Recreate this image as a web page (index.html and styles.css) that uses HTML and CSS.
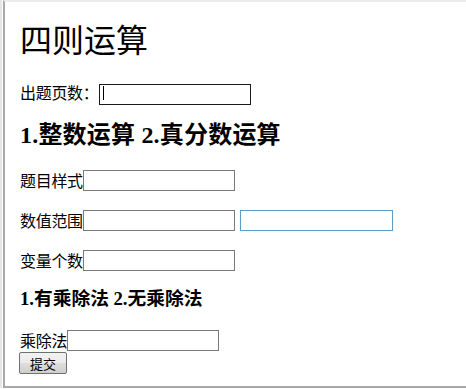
FILE: index.html
```html
<!DOCTYPE html>
<html lang="zh-CN">

<head>
  <meta charset="UTF-8">
  <title>四则运算</title>
  <link rel="stylesheet" href="styles.css">
</head>

<body>
  <div class="frame">
    <h1>四则运算</h1>

    <form class="quiz-form">
      <div class="row row-first">
        <label>出题页数：</label>
        <span class="caret-wrap">
          <input type="text" class="field field-dark">
          <span class="caret"></span>
        </span>
      </div>

      <h2>1.整数运算 2.真分数运算</h2>

      <div class="row row-style">
        <label>题目样式</label><input type="text" class="field">
      </div>

      <div class="row">
        <label>数值范围</label><input type="text" class="field"><input type="text" class="field field-focus">
      </div>

      <div class="row">
        <label>变量个数</label><input type="text" class="field">
      </div>

      <h3>1.有乘除法 2.无乘除法</h3>

      <div class="row row-last">
        <label>乘除法</label><input type="text" class="field">
      </div>
      <button type="button" class="submit-btn">提交</button>
    </form>
  </div>
</body>

</html>
```

FILE: styles.css
```css
* {
  box-sizing: border-box;
}

html {
  background: #ffffff;
}

body {
  margin: 0;
  border-left: 2px solid #e6e6e6;
  font-family: "Noto Sans CJK SC", "Liberation Sans", sans-serif;
  color: #000;
}

.frame {
  margin-left: 1px;
  height: 388px;
  border-top: 2px solid #ececec;
  border-left: 2px solid #a8a8a8;
  border-bottom: 2px solid #a8a8a8;
  padding-left: 14px;
  background: #fff;
}

h1 {
  margin: 21px 0 0 1px;
  font-size: 32px;
  line-height: 36px;
  font-weight: 400;
  font-family: "Liberation Serif", "Noto Sans CJK SC", serif;
}

h2 {
  margin: 18px 0 0 1px;
  font-size: 24px;
  line-height: 28px;
  font-weight: 700;
  letter-spacing: 0.2px;
  font-family: "Liberation Serif", "Noto Sans CJK SC", serif;
}

h3 {
  margin: 17px 0 0 1px;
  font-size: 18.72px;
  line-height: 22px;
  font-weight: 700;
  font-family: "Liberation Serif", "Noto Sans CJK SC", serif;
}

.row {
  display: flex;
  align-items: center;
  height: 21px;
  margin-top: 19px;
  padding-left: 1px;
  font-size: 16px;
  line-height: 21px;
}

.row-first {
  margin-top: 23px;
}

.row-style {
  margin-top: 21px;
}

.row-last {
  margin-top: 20px;
}

.row label {
  white-space: nowrap;
  letter-spacing: -0.3px;
}

.field {
  width: 152px;
  height: 21px;
  margin: 0;
  padding: 0 2px;
  border: 1px solid #7a7a7a;
  background: #fff;
  font-size: 13px;
}

.field-dark {
  border-color: #1a1a1a;
}

.field-focus {
  margin-left: 5px;
  width: 153px;
  border-color: #5b9ec4;
  box-shadow: 0 0 2px #d8f4ff;
}

.caret-wrap {
  position: relative;
  display: inline-block;
  height: 21px;
}

.caret {
  position: absolute;
  left: 4px;
  top: 4px;
  width: 1px;
  height: 14px;
  background: #000;
}

.submit-btn {
  display: block;
  width: 48px;
  height: 22px;
  margin-top: 1px;
  padding: 0;
  border: 1px solid #707070;
  border-radius: 2px;
  background: linear-gradient(to bottom, #f2f2f2 0%, #ebebeb 50%, #dddddd 51%, #cfcfcf 100%);
  font-family: "Noto Sans CJK SC", sans-serif;
  font-size: 13px;
  color: #000;
}
```
